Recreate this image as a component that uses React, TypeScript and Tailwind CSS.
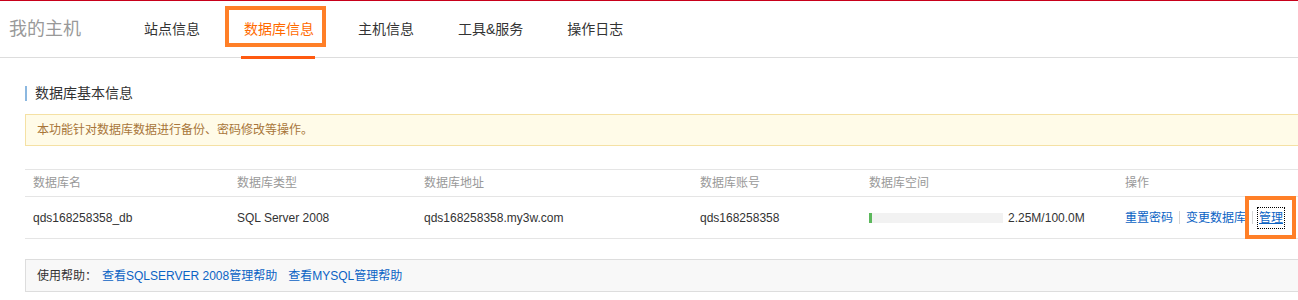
// 主机管理 · 数据库信息页
const font = "font-['Liberation_Sans','Noto_Sans_CJK_SC',sans-serif]";

const TABS = ["站点信息", "数据库信息", "主机信息", "工具&服务", "操作日志"];
const ACTIVE = "数据库信息";

const COLS = [
  { t: "数据库名", w: "w-[204px]" },
  { t: "数据库类型", w: "w-[187px]" },
  { t: "数据库地址", w: "w-[276px]" },
  { t: "数据库账号", w: "w-[169px]" },
  { t: "数据库空间", w: "w-[256px]" },
  { t: "操作", w: "flex-1" },
];

const DB = {
  name: "qds168258358_db",
  type: "SQL Server 2008",
  host: "qds168258358.my3w.com",
  user: "qds168258358",
  used: 2.25,
  total: 100.0,
};

function Header() {
  return (
    <div className="flex h-[58px] items-stretch border-t border-b border-t-[#c8001a] border-b-[#dddddd]">
      <div className="flex w-[122px] items-center pl-[9px] text-[18px] text-[#999]">我的主机</div>
      <nav className="flex items-stretch">
        {TABS.map((t) => {
          const on = t === ACTIVE;
          return (
            <a
              key={t}
              className={`relative mx-[19px] flex items-center px-[3px] text-[14px] ${on ? "text-[#ff6a00]" : "text-[#333]"}`}
            >
              {t}
              {on && (
                <>
                  <span className="absolute bottom-[-2px] left-0 right-[2px] h-[3px] bg-[#ff5a10]" />
                  <span className="absolute top-[5px] left-[-16px] right-[-9px] h-[41px] border-[4px] border-[#ff7f27]" />
                </>
              )}
            </a>
          );
        })}
      </nav>
    </div>
  );
}

function Sep() {
  return <span className="mx-[6px] inline-block h-[13px] w-px bg-[#d5d5d5]" />;
}

function Table() {
  const pct = (DB.used / DB.total) * 100;
  return (
    <div className="mt-[23px] text-[12px]">
      <div className="flex h-[28px] items-center border-t border-b border-[#e5e5e5] text-[#999]">
        {COLS.map((c) => (
          <div key={c.t} className={`${c.w} pl-[8px]`}>
            {c.t}
          </div>
        ))}
      </div>
      <div className="flex h-[42px] items-center border-b border-[#e5e5e5] text-[#333]">
        <div className="w-[204px] pl-[8px]">{DB.name}</div>
        <div className="w-[187px] pl-[8px]">{DB.type}</div>
        <div className="w-[276px] pl-[8px]">{DB.host}</div>
        <div className="w-[169px] pl-[8px]">{DB.user}</div>
        <div className="flex w-[256px] items-center pl-[8px]">
          <div className="h-[10px] w-[134px] bg-[#f2f2f2]">
            <div className="h-full min-w-[3px] bg-[#5cb85c]" style={{ width: `${pct}%` }} />
          </div>
          <span className="ml-[5px]">
            {DB.used.toFixed(2)}M/{DB.total.toFixed(1)}M
          </span>
        </div>
        <div className="flex flex-1 items-center pl-[8px] text-[#0b63c4]">
          <a>重置密码</a>
          <Sep />
          <a>变更数据库</a>
          <Sep />
          <a className="relative underline outline-1 outline-offset-1 outline-dotted outline-black">
            管理
            <span className="absolute top-[-13px] bottom-[-12px] left-[-14px] right-[-13px] border-[4px] border-[#ff7f27]" />
          </a>
        </div>
      </div>
    </div>
  );
}

export default function App() {
  return (
    <div className={`${font} h-[300px] w-full overflow-hidden bg-white`}>
      <Header />
      <div className="pl-[25px]">
        <div className="w-[1300px]">
          <div className="mt-[28px] flex h-[15px] items-center">
            <span className="h-[15px] w-[2px] bg-[#8cb8e0]" />
            <span className="ml-[8px] text-[14px] leading-[15px] text-[#333]">数据库基本信息</span>
          </div>
          <div className="mt-[13px] flex h-[32px] items-center border border-[#f5e1a4] bg-[#fffbe8] pl-[11px] text-[12px] text-[#a8763a]">
            本功能针对数据库数据进行备份、密码修改等操作。
          </div>
          <Table />
          <div className="mt-[20px] flex h-[33px] items-center border border-[#dddddd] bg-[#f8f8f8] pl-[11px] text-[12px] text-[#333]">
            <span>使用帮助：</span>
            <a className="ml-[5px] text-[#0b63c4]">查看SQLSERVER 2008管理帮助</a>
            <a className="ml-[11px] text-[#0b63c4]">查看MYSQL管理帮助</a>
          </div>
        </div>
      </div>
    </div>
  );
}
